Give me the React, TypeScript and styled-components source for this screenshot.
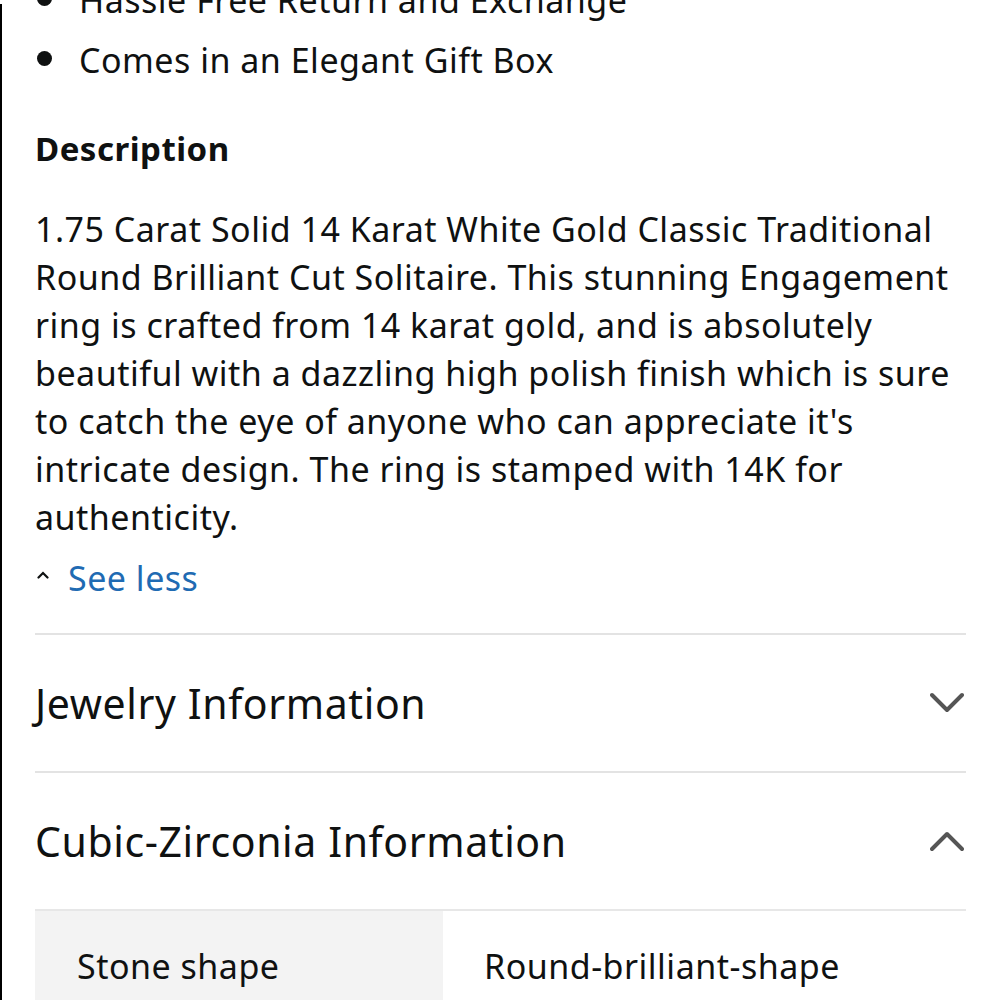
import React from 'react'
import styled, { createGlobalStyle } from 'styled-components'

const GlobalStyle = createGlobalStyle`
  html, body {
    margin: 0;
    padding: 0;
    background: #fff;
  }
  body {
    font-family: "Noto Sans", "Liberation Sans", sans-serif;
    color: #0f1111;
  }
`

const features = ['Hassle Free Return and Exchange', 'Comes in an Elegant Gift Box']

const description =
  "1.75 Carat Solid 14 Karat White Gold Classic Traditional Round Brilliant Cut Solitaire. This stunning Engagement ring is crafted from 14 karat gold, and is absolutely beautiful with a dazzling high polish finish which is sure to catch the eye of anyone who can appreciate it's intricate design. The ring is stamped with 14K for authenticity."

const Chevron = ({ up }: { up?: boolean }) => (
  <svg width="34" height="22" viewBox="0 0 34 22" fill="none">
    <polyline
      points={up ? '2,19 17,4 32,19' : '2,3 17,18 32,3'}
      stroke="#555"
      strokeWidth="4"
      strokeLinecap="round"
      strokeLinejoin="round"
    />
  </svg>
)

const Caret = () => (
  <svg width="12" height="8" viewBox="0 0 12 8" fill="none">
    <polyline points="1.5,6.5 6,2 10.5,6.5" stroke="#0f1111" strokeWidth="2.2" strokeLinecap="round" />
  </svg>
)

const App = () => {
  return (
    <>
      <GlobalStyle />
      <Screen>
        <Edge />
        <Content>
          <BulletList>
            {features.map((f) => (
              <Bullet key={f}>{f}</Bullet>
            ))}
          </BulletList>

          <SectionTitle>Description</SectionTitle>
          <Paragraph>{description}</Paragraph>

          <ToggleLink>
            <Caret />
            <span>See less</span>
          </ToggleLink>

          <Accordion>
            <AccordionRow>
              <AccordionTitle>Jewelry Information</AccordionTitle>
              <Chevron />
            </AccordionRow>
            <AccordionRow>
              <AccordionTitle>Cubic-Zirconia Information</AccordionTitle>
              <Chevron up />
            </AccordionRow>
          </Accordion>

          <SpecTable>
            <SpecRow>
              <SpecLabel>Stone shape</SpecLabel>
              <SpecValue>Round-brilliant-shape</SpecValue>
            </SpecRow>
            <SpecRow>
              <SpecLabel>Stone color</SpecLabel>
              <SpecValue>White</SpecValue>
            </SpecRow>
          </SpecTable>
        </Content>
      </Screen>
    </>
  )
}

export default App

const Screen = styled.div`
  display: flex;
  height: 1000px;
  overflow: hidden;
`

const Edge = styled.div`
  flex: 0 0 2px;
  margin-top: 4px;
  background: #000;
`

const Content = styled.div`
  flex: 1;
  padding: 0 34px 0 33px;
  font-size: 34px;
  letter-spacing: 0.5px;
  line-height: 48px;
`

/* page is scrolled, so the first bullet sits partly above the top */
const BulletList = styled.ul`
  list-style: none;
  margin: -24px 0 0;
  padding: 0;
`

const Bullet = styled.li`
  position: relative;
  padding-left: 44px;
  margin-bottom: 12px;

  &::before {
    content: '';
    position: absolute;
    left: 2px;
    top: 15px;
    width: 15px;
    height: 15px;
    border-radius: 50%;
    background: #0f1111;
  }
`

const SectionTitle = styled.div`
  margin-top: 41px;
  font-size: 33px;
  font-weight: 700;
`

const Paragraph = styled.p`
  margin: 32px 0 0;
`

const ToggleLink = styled.div`
  display: flex;
  align-items: center;
  gap: 19px;
  margin-top: 13px;
  padding-left: 2px;
  color: #1f6bb3;

  svg {
    margin-top: -6px;
  }
`

const Accordion = styled.div`
  margin-top: 31px;
`

const AccordionRow = styled.div`
  display: flex;
  justify-content: space-between;
  align-items: center;
  height: 136px;
  border-top: 2px solid #e3e3e3;
  padding-right: 2px;
`

const AccordionTitle = styled.div`
  font-size: 41px;
  letter-spacing: 0.6px;
`

const SpecTable = styled.div`
  border-top: 2px solid #e7e7e7;
`

const SpecRow = styled.div`
  display: grid;
  grid-template-columns: 408px 1fr;
`

const SpecLabel = styled.div`
  background: #f3f3f3;
  padding: 31px 42px;
`

const SpecValue = styled.div`
  padding: 31px 41px;
`
